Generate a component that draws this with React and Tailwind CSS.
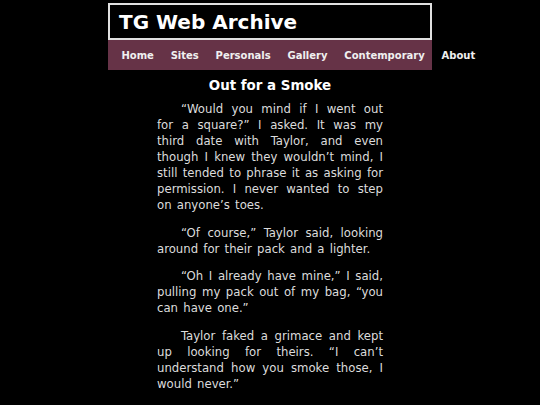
const nav = ['Home', 'Sites', 'Personals', 'Gallery', 'Contemporary', 'About']

const paras = [
  '“Would you mind if I went out for a square?” I asked. It was my third date with Taylor, and even though I knew they wouldn’t mind, I still tended to phrase it as asking for permission. I never wanted to step on anyone’s toes.',
  '“Of course,” Taylor said, looking around for their pack and a lighter.',
  '“Oh I already have mine,” I said, pulling my pack out of my bag, “you can have one.”',
  'Taylor faked a grimace and kept up looking for theirs. “I can’t understand how you smoke those, I would never.”',
]

export default function App() {
  return (
    <div className="min-h-[405px] bg-black font-['DejaVu_Sans',Verdana,sans-serif] overflow-hidden">
      <div className="w-[324px] mx-auto pt-[3px]">
        <div className="h-[37px] border-2 border-[#e0e0e0] bg-black pl-[9px] flex items-center">
          <h1 className="text-[20px] font-bold text-white leading-none">TG Web Archive</h1>
        </div>
        <nav className="h-[30px] bg-[#663347] flex items-center pl-[5px] whitespace-nowrap">
          {nav.map(n => (
            <a key={n} className="px-[8.4px] text-[10px] font-bold text-[#f0f0f0] shrink-0">{n}</a>
          ))}
        </nav>
      </div>
      <h2 className="text-center text-[13.4px] font-bold text-white mt-[7px] leading-[18px]">Out for a Smoke</h2>
      <div className="w-[226px] mx-auto mt-[6px] font-['DejaVu_Sans_Condensed','DejaVu_Sans',sans-serif] text-[13px] leading-[16px] [word-spacing:1.5px] text-[#dcdcdc]">
        {paras.map((p, i) => (
          <p key={i} className="text-justify indent-[24px] mb-[11.5px]">{p}</p>
        ))}
      </div>
    </div>
  )
}
